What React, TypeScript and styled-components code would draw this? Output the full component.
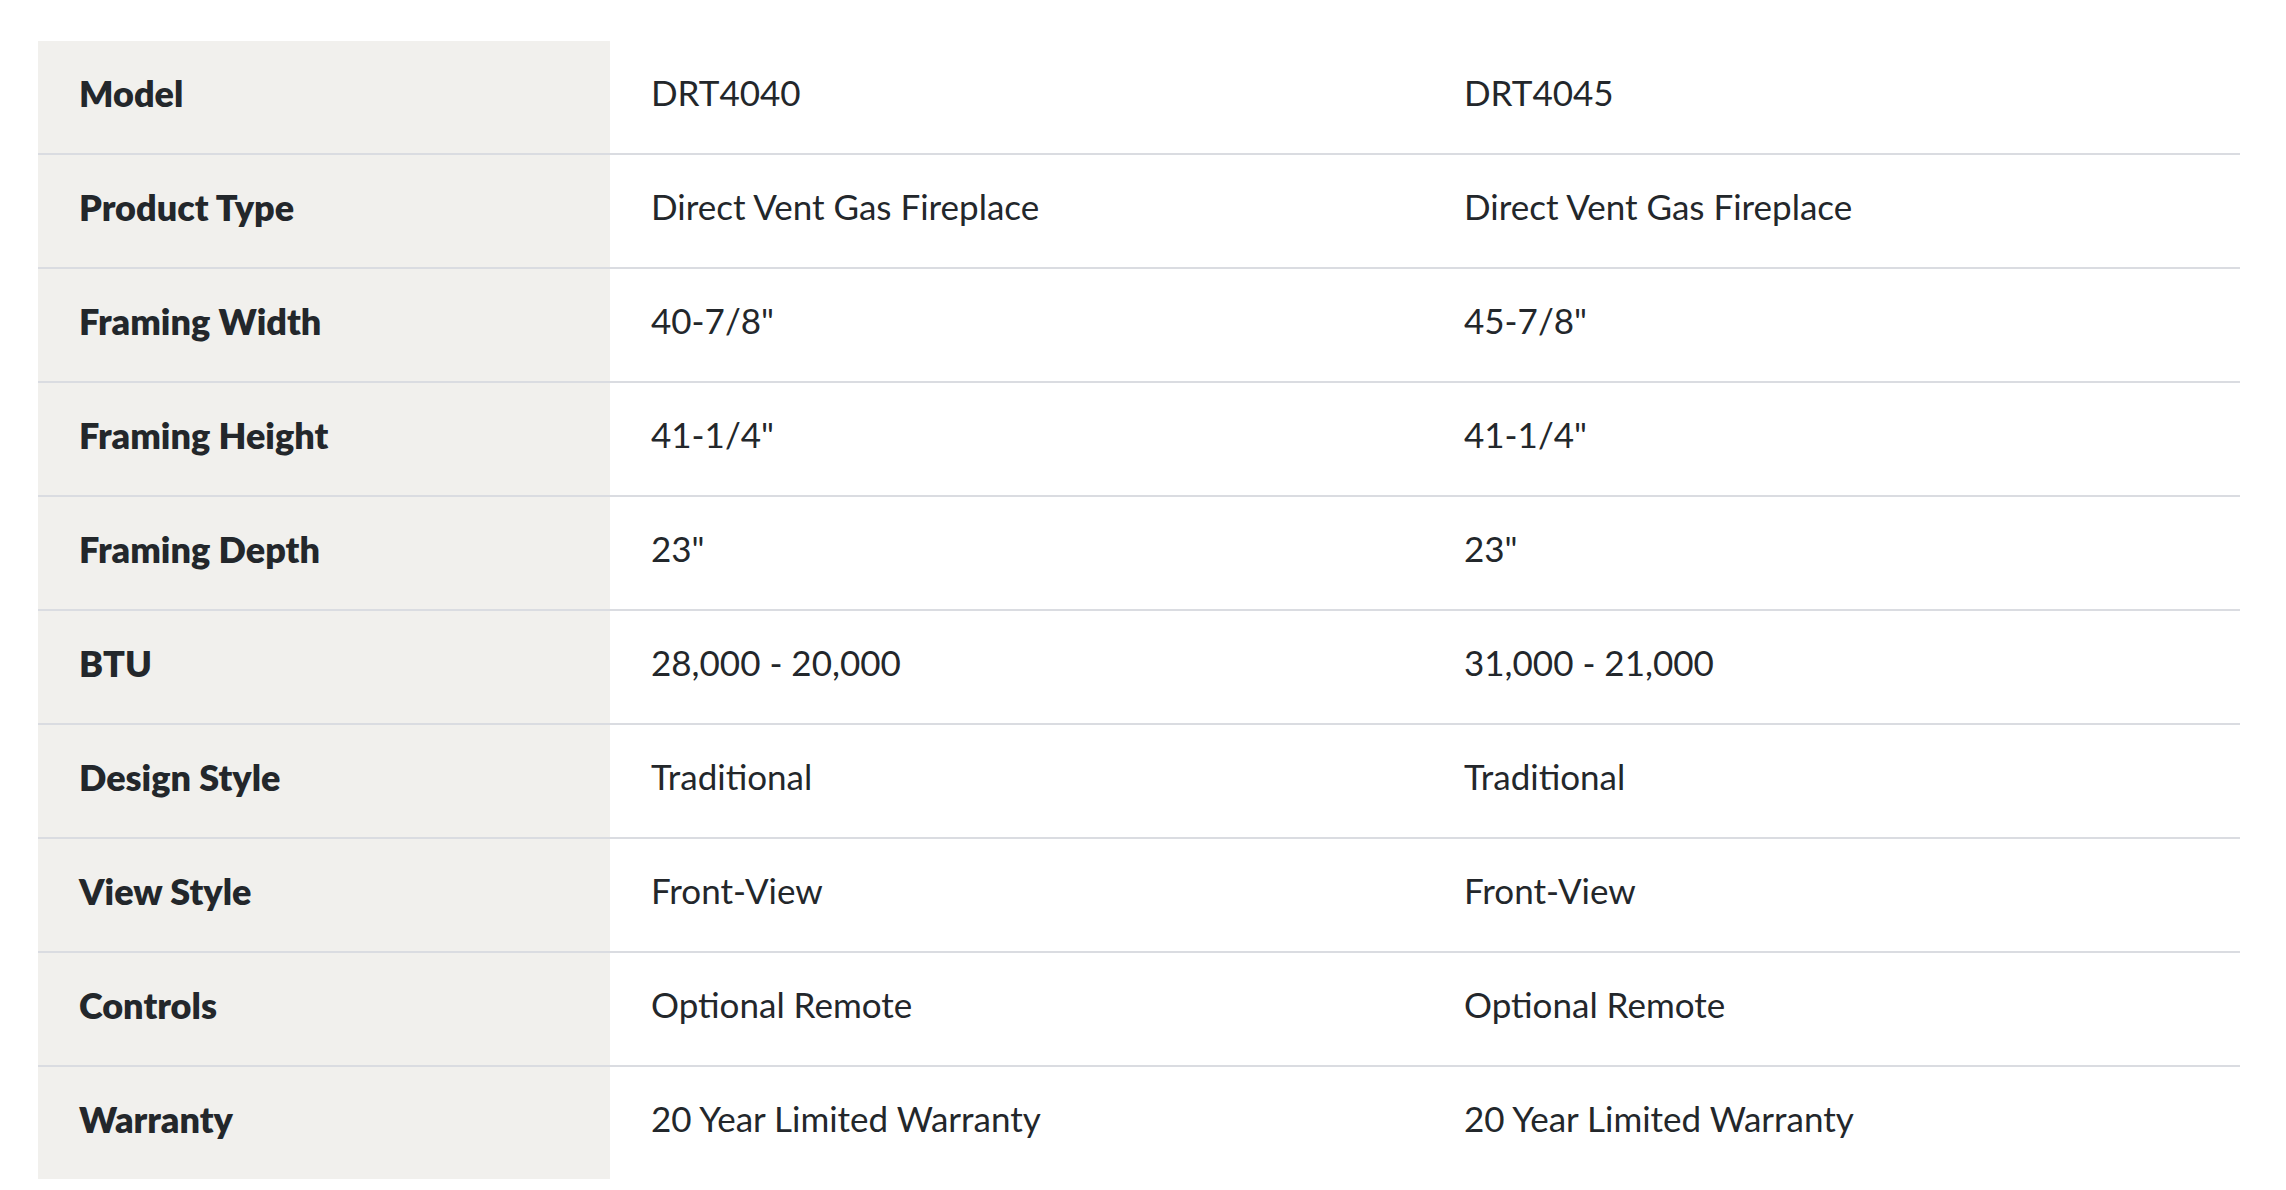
import React from 'react'
import styled, { createGlobalStyle } from 'styled-components'

const GlobalStyle = createGlobalStyle`
  html, body {
    margin: 0;
    padding: 0;
    background: #ffffff;
  }
  body {
    font-family: Lato, 'Noto Sans', sans-serif;
    color: #23272b;
  }
`

const Page = styled.div`
  padding: 41px 46px 12px 38px;
`

const SpecTable = styled.div`
  display: flex;
  flex-direction: column;
  width: 2202px;
`

const SpecRow = styled.div`
  display: grid;
  grid-template-columns: 572px 813px 1fr;
  height: 112px;
  border-bottom: 2px solid #dadce1;

  &:last-child {
    border-bottom: none;
  }
`

const Cell = styled.div<{ $label?: boolean }>`
  display: flex;
  align-items: center;
  padding: 0 41px 9px;
  line-height: 1;
  font-size: ${p => (p.$label ? '36px' : '35px')};
  font-weight: ${p => (p.$label ? 800 : 400)};
  background: ${p => (p.$label ? '#f1f0ed' : 'transparent')};
`

const specs: [string, string, string][] = [
  ['Model', 'DRT4040', 'DRT4045'],
  ['Product Type', 'Direct Vent Gas Fireplace', 'Direct Vent Gas Fireplace'],
  ['Framing Width', '40-7/8"', '45-7/8"'],
  ['Framing Height', '41-1/4"', '41-1/4"'],
  ['Framing Depth', '23"', '23"'],
  ['BTU', '28,000 - 20,000', '31,000 - 21,000'],
  ['Design Style', 'Traditional', 'Traditional'],
  ['View Style', 'Front-View', 'Front-View'],
  ['Controls', 'Optional Remote', 'Optional Remote'],
  ['Warranty', '20 Year Limited Warranty', '20 Year Limited Warranty'],
]

export default function App() {
  return (
    <>
      <GlobalStyle />
      <Page>
        <SpecTable>
          {specs.map(([label, a, b]) => (
            <SpecRow key={label}>
              <Cell $label>{label}</Cell>
              <Cell>{a}</Cell>
              <Cell>{b}</Cell>
            </SpecRow>
          ))}
        </SpecTable>
      </Page>
    </>
  )
}
